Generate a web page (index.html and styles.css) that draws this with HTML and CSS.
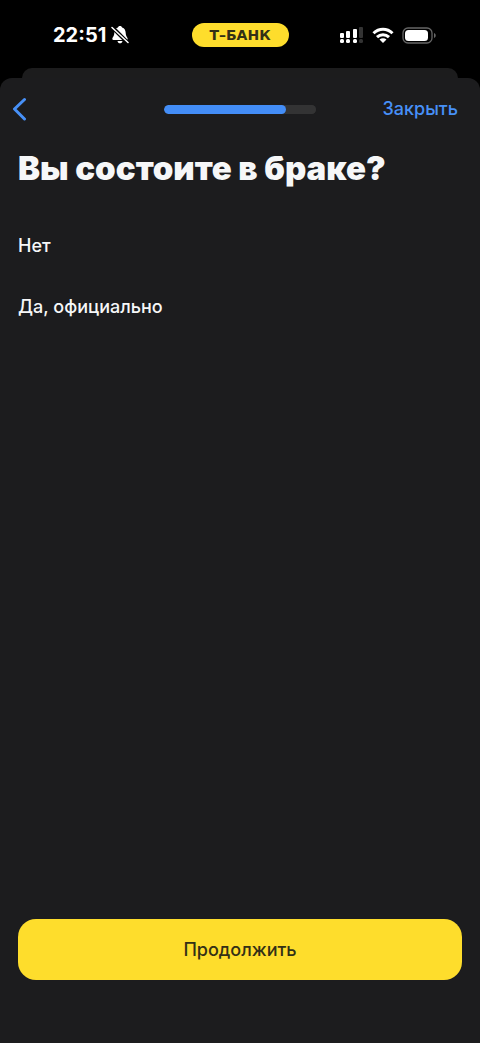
FILE: index.html
```html
<!DOCTYPE html>
<html lang="ru">
<head>
    <meta charset="UTF-8">
    <meta name="viewport" content="width=device-width, initial-scale=1.0">
    <title>Вы состоите в браке?</title>
    <link rel="stylesheet" href="styles.css">
</head>
<body>
    <header class="status">
        <div class="status-time">
            <span>22:51</span>
            <svg class="bell" width="18" height="18" viewBox="0 0 18 18" aria-hidden="true">
                <path fill="#fff" d="M9 0C10.200 0 10.900 .6 11.100 1.500C13.600 2.300 14.600 4.400 14.700 7C14.800 10.300 16.300 10.900 16.700 12.800C16.800 13.500 16.400 14 15.700 14H2.300C1.600 14 1.200 13.500 1.300 12.800C1.700 10.900 3.200 10.300 3.300 7C3.400 4.400 4.400 2.300 6.900 1.500C7.100 .6 7.800 0 9 0ZM6.500 15H11.500C11.200 16.500 10.300 17.300 9 17.300C7.700 17.300 6.800 16.500 6.500 15Z"/>
                <path stroke="#000" stroke-width="4" d="M0 0L18 18"/>
                <path stroke="#fff" stroke-width="1.500" stroke-linecap="round" d="M1 1.500L17 16.500"/>
            </svg>
        </div>
        <div class="island">Т–БАНК</div>
        <div class="status-icons">
            <svg width="25" height="17" viewBox="0 0 25 17" fill="#fff" aria-hidden="true">
                <rect x="1" y="6" width="4" height="5" rx="1"/>
                <rect x="7" y="4" width="4" height="7" rx="1"/>
                <rect x="14" y="2" width="4" height="9" rx="1"/>
                <rect x="20" y="0" width="4" height="11" rx="1" fill="#333"/>
                <rect x="1" y="12" width="4" height="4" rx="1.500"/>
                <rect x="7" y="12" width="4" height="4" rx="1.500"/>
                <rect x="14" y="12" width="4" height="4" rx="1.500"/>
                <rect x="20" y="12" width="4" height="4" rx="1.500" fill="#333"/>
            </svg>
            <svg width="22" height="17" viewBox="0 0 22 17" fill="none" stroke="#fff" stroke-width="3" aria-hidden="true">
                <path d="M1.500 6.300C7 .9 15 .9 20.500 6.300"/>
                <path d="M5 10.200C8.500 6.800 13.500 6.800 17 10.200"/>
                <path fill="#fff" stroke="none" d="M7.500 12.600C9.500 10.900 12.500 10.900 14.500 12.600L11 16Z"/>
            </svg>
            <svg width="34" height="17" viewBox="0 0 34 17" aria-hidden="true">
                <rect x="1" y="1" width="29" height="15" rx="5" fill="none" stroke="#666" stroke-width="1.300"/>
                <rect x="3" y="3" width="23" height="11" rx="3.500" fill="#fff"/>
                <path fill="#666" d="M32 6C34.300 7 34.300 10 32 11Z"/>
            </svg>
        </div>
    </header>

    <!-- край предыдущего экрана под шторкой -->
    <div class="sheet-behind"></div>

    <div class="sheet">
        <nav class="nav">
            <button class="back" type="button" aria-label="Назад">
                <svg width="16" height="24" viewBox="0 0 16 24" fill="none" stroke="#4790f7" stroke-width="3" stroke-linecap="round" stroke-linejoin="round">
                    <path d="M12.500 2.500L2.500 12L12.500 22"/>
                </svg>
            </button>
            <progress class="progress" value="80" max="100" aria-label="Прогресс"></progress>
            <button class="close" type="button">Закрыть</button>
        </nav>

        <main class="content">
            <h1 class="title">Вы состоите в браке?</h1>
            <div class="options">
                <button class="option" type="button">Нет</button>
                <button class="option" type="button">Да, официально</button>
            </div>
        </main>

        <footer class="footer">
            <button class="submit" type="button">Продолжить</button>
        </footer>
    </div>
</body>
</html>
```

FILE: styles.css
```css
*{
    box-sizing: border-box;
}
body{
    display: flex;
    flex-direction: column;
    min-height: 100vh;
    margin: 0;
    background: #000;
    color: #f6f7f8;
    font-family: Inter, Roboto, sans-serif;
}
button{
    padding: 0;
    border: 0;
    background: none;
    color: inherit;
    font-family: inherit;
    font-size: 18px;
    font-weight: 500;
    line-height: 24px;
    cursor: pointer;
}
svg{
    display: block;
}

/* статус-бар */
.status{
    display: grid;
    grid-template-columns: 1fr auto 1fr;
    align-items: center;
    height: 68px;
    padding: 2px 44px 0;
}
.status-time{
    display: flex;
    align-items: center;
    gap: 5px;
    padding-left: 9px;
    color: #fff;
    font-size: 20px;
    font-weight: 700;
    line-height: 24px;
}
.island{
    width: 97px;
    border-radius: 12px;
    background: #fedd2c;
    color: #333016;
    font-family: "DejaVu Sans", sans-serif;
    font-size: 14px;
    font-weight: 700;
    line-height: 24px;
    text-align: center;
}
.status-icons{
    display: flex;
    align-items: center;
    justify-content: flex-end;
    gap: 8px;
}

/* шторка */
.sheet-behind{
    height: 10px;
    margin: 0 22px;
    border-radius: 10px 10px 0 0;
    background: #1c1c1d;
}
.sheet{
    display: flex;
    flex: 1;
    flex-direction: column;
    border-radius: 12px 12px 0 0;
    background: #1c1c1e;
}
.nav{
    display: grid;
    grid-template-columns: 1fr 152px 1fr;
    align-items: center;
    height: 62px;
    padding: 0 12px;
}
.back{
    justify-self: start;
}
.progress{
    width: 100%;
    height: 9px;
    border: 0;
    border-radius: 5px;
    background: #333334;
    overflow: hidden;
    appearance: none;
}
.progress::-webkit-progress-bar{
    border-radius: 5px;
    background: #333334;
}
.progress::-webkit-progress-value{
    border-radius: 5px;
    background: #438df7;
}
.close{
    justify-self: end;
    padding-right: 10px;
    color: #4790f7;
}

/* вопрос */
.content{
    flex: 1;
    padding: 8px 18px;
}
.title{
    margin: 0 0 27px;
    font-size: 33px;
    font-weight: 900;
    line-height: 40px;
}
.options{
    display: flex;
    flex-direction: column;
}
.option{
    height: 61px;
    text-align: left;
}
.footer{
    padding: 0 18px 63px;
}
.submit{
    width: 100%;
    height: 61px;
    border-radius: 18px;
    background: #fedd2c;
    color: #333016;
}
```
